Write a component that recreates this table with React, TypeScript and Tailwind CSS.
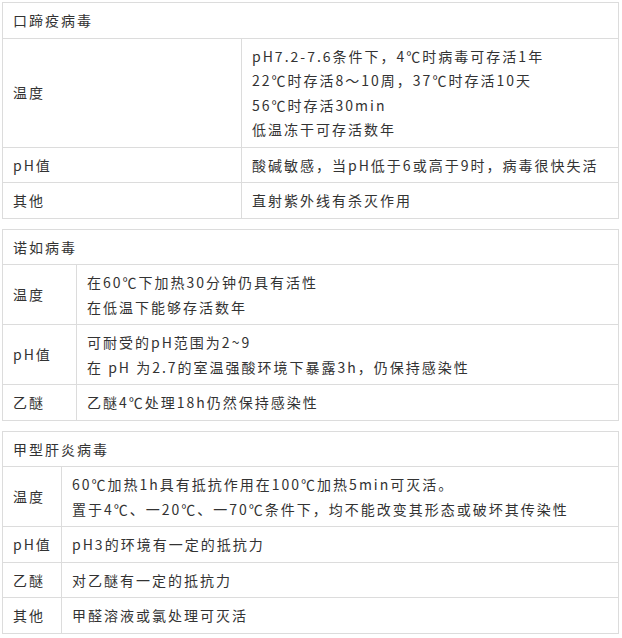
type Row = { label: string; lines: string[] };
type Block = { title: string; firstCol: number; rows: Row[] };

const blocks: Block[] = [
  {
    title: "口蹄疫病毒",
    firstCol: 239,
    rows: [
      {
        label: "温度",
        lines: [
          "pH7.2-7.6条件下，4℃时病毒可存活1年",
          "22℃时存活8～10周，37℃时存活10天",
          "56℃时存活30min",
          "低温冻干可存活数年",
        ],
      },
      { label: "pH值", lines: ["酸碱敏感，当pH低于6或高于9时，病毒很快失活"] },
      { label: "其他", lines: ["直射紫外线有杀灭作用"] },
    ],
  },
  {
    title: "诺如病毒",
    firstCol: 74,
    rows: [
      { label: "温度", lines: ["在60℃下加热30分钟仍具有活性", "在低温下能够存活数年"] },
      { label: "pH值", lines: ["可耐受的pH范围为2~9", "在 pH 为2.7的室温强酸环境下暴露3h，仍保持感染性"] },
      { label: "乙醚", lines: ["乙醚4℃处理18h仍然保持感染性"] },
    ],
  },
  {
    title: "甲型肝炎病毒",
    firstCol: 59,
    rows: [
      {
        label: "温度",
        lines: [
          "60℃加热1h具有抵抗作用在100℃加热5min可灭活。",
          "置于4℃、一20℃、一70℃条件下，均不能改变其形态或破坏其传染性",
        ],
      },
      { label: "pH值", lines: ["pH3的环境有一定的抵抗力"] },
      { label: "乙醚", lines: ["对乙醚有一定的抵抗力"] },
      { label: "其他", lines: ["甲醛溶液或氯处理可灭活"] },
    ],
  },
];

function VirusTable({ block }: { block: Block }) {
  return (
    <table className="w-[617px] table-fixed border-collapse">
      <colgroup>
        <col style={{ width: block.firstCol }} />
        <col />
      </colgroup>
      <tbody>
        <tr>
          <td colSpan={2} className="border border-[#dcdcdc] px-[10px] py-[5px]">
            {block.title}
          </td>
        </tr>
        {block.rows.map((row) => (
          <tr key={row.label}>
            <td className="border border-[#dcdcdc] px-[10px] py-[5px] align-middle whitespace-nowrap">
              {row.label}
            </td>
            <td className="border border-[#dcdcdc] px-[10px] py-[5px] align-middle">
              {row.lines.map((l, i) => (
                <div key={i} className="whitespace-nowrap">
                  {l}
                </div>
              ))}
            </td>
          </tr>
        ))}
      </tbody>
    </table>
  );
}

export default function App() {
  return (
    <div
      className="min-h-screen bg-white pt-[2px] pl-[2px] text-[14px] leading-[1.75] tracking-[2px] text-[#333]"
      style={{ fontFamily: '"Noto Sans CJK SC", "Noto Sans", sans-serif' }}
    >
      <div className="flex flex-col gap-[10px]">
        {blocks.map((b) => (
          <VirusTable key={b.title} block={b} />
        ))}
      </div>
    </div>
  );
}
